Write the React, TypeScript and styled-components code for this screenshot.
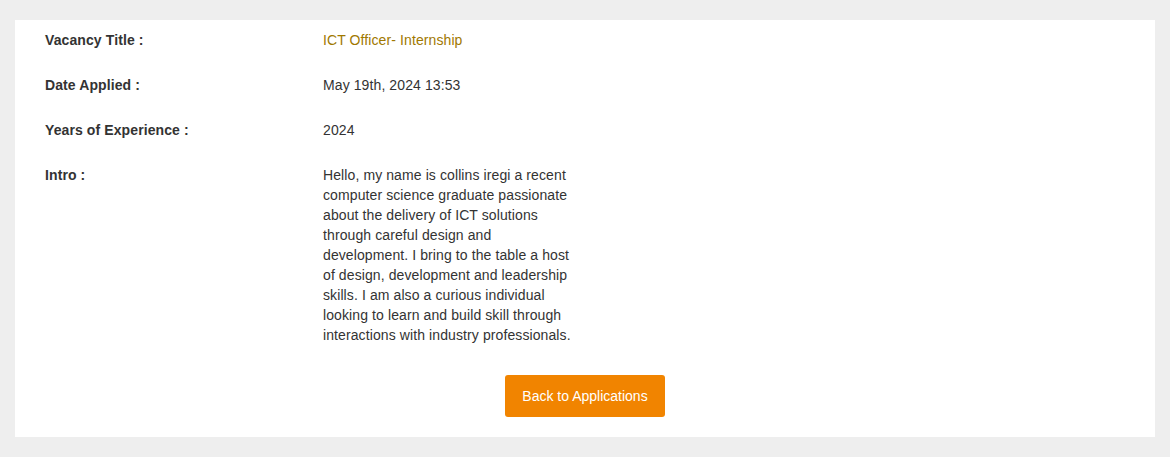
import React from "react";
import styled, { createGlobalStyle } from "styled-components";

const Global = createGlobalStyle`
  html, body { margin: 0; padding: 0; background: #eeeeee; }
  body { font-family: "Liberation Sans", Arial, sans-serif; font-size: 14px; color: #333; }
`;

const Page = styled.div`
  padding: 20px 15px 21px;
`;

const Card = styled.section`
  background: #ffffff;
  padding: 10px 30px 20px;
  display: flex;
  flex-direction: column;
  gap: 30px;
`;

const Details = styled.dl`
  margin: 0;
  display: grid;
  grid-template-columns: 278px 250px;
  row-gap: 25px;
  line-height: 20px;
`;

const Label = styled.dt`
  font-weight: bold;
  color: #333;
  letter-spacing: 0.1px;
`;

const Value = styled.dd<{ $accent?: boolean }>`
  margin: 0;
  color: ${(p) => (p.$accent ? "#a07800" : "#333")};
  letter-spacing: 0.1px;
`;

const Actions = styled.div`
  display: flex;
  justify-content: center;
`;

const Button = styled.button`
  background: #f18400;
  color: #fff;
  border: none;
  border-radius: 3px;
  font-family: inherit;
  font-size: 14px;
  height: 42px;
  padding: 0 17px;
  cursor: pointer;
`;

const rows: { label: string; value: string; accent?: boolean }[] = [
  { label: "Vacancy Title :", value: "ICT Officer- Internship", accent: true },
  { label: "Date Applied :", value: "May 19th, 2024 13:53" },
  { label: "Years of Experience :", value: "2024" },
  {
    label: "Intro :",
    value:
      "Hello, my name is collins iregi a recent computer science graduate passionate about the delivery of ICT solutions through careful design and development. I bring to the table a host of design, development and leadership skills. I am also a curious individual looking to learn and build skill through interactions with industry professionals.",
  },
];

export default function App() {
  return (
    <>
      <Global />
      <Page>
        <Card>
          <Details>
            {rows.map((r) => (
              <React.Fragment key={r.label}>
                <Label>{r.label}</Label>
                <Value $accent={r.accent}>{r.value}</Value>
              </React.Fragment>
            ))}
          </Details>
          <Actions>
            <Button>Back to Applications</Button>
          </Actions>
        </Card>
      </Page>
    </>
  );
}
